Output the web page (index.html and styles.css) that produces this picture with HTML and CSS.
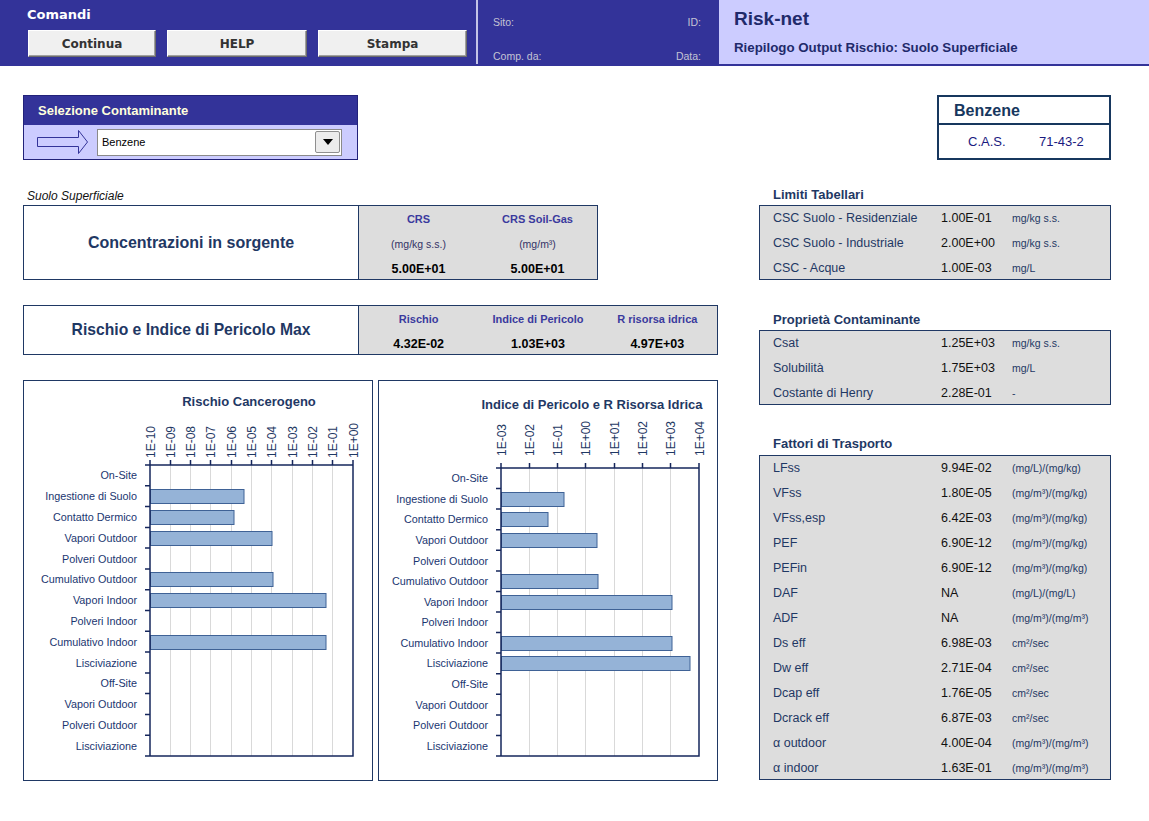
FILE: index.html
```html
<!DOCTYPE html>
<html lang="it">
<head>
<meta charset="utf-8">
<title>Risk-net - Riepilogo Output Rischio</title>
<link rel="stylesheet" href="styles.css">
</head>
<body>
<header class="topbar">
  <div class="cmd">
    <div class="cmd-title">Comandi</div>
    <div class="cmd-buttons">
      <button class="btn btn-continua">Continua</button>
      <button class="btn btn-help">HELP</button>
      <button class="btn btn-stampa">Stampa</button>
    </div>
  </div>
  <div class="info">
    <div class="info-row"><span>Sito:</span><span>ID:</span></div>
    <div class="info-row"><span>Comp. da:</span><span>Data:</span></div>
  </div>
  <div class="title-area">
    <div class="app-name">Risk-net</div>
    <div class="app-sub">Riepilogo Output Rischio: Suolo Superficiale</div>
  </div>
</header>

<main class="main">
  <section class="col-left">
    <div class="sel">
      <div class="sel-head">Selezione Contaminante</div>
      <div class="sel-body">
        <svg class="sel-arrow" width="53" height="25" viewBox="0 0 53 25">
          <path d="M1.5 7.5 H42.5 V0.5 L51.5 12 L42.5 23.5 V16.5 H1.5 Z" fill="#ccccff" stroke="#333399" stroke-width="1"/>
        </svg>
        <div class="select">
          <span class="select-text">Benzene</span>
          <span class="select-btn"><span class="tri"></span></span>
        </div>
      </div>
    </div>

    <div class="suolo">Suolo Superficiale</div>

    <div class="conc">
      <div class="conc-title">Concentrazioni in sorgente</div>
      <div class="conc-data cols2">
        <div class="col-h">CRS</div>
        <div class="col-h">CRS Soil-Gas</div>
        <div class="col-u">(mg/kg s.s.)</div>
        <div class="col-u">(mg/m³)</div>
        <div class="col-v">5.00E+01</div>
        <div class="col-v">5.00E+01</div>
      </div>
    </div>

    <div class="risk">
      <div class="conc-title risk-title">Rischio e Indice di Pericolo Max</div>
      <div class="conc-data cols3">
        <div class="col-h">Rischio</div>
        <div class="col-h">Indice di Pericolo</div>
        <div class="col-h">R risorsa idrica</div>
        <div class="col-v">4.32E-02</div>
        <div class="col-v">1.03E+03</div>
        <div class="col-v">4.97E+03</div>
      </div>
    </div>

    <div class="charts">
      <div class="chart chart1">
        <svg width="348" height="399" viewBox="0 0 348 399">
          <text class="c-title" x="225" y="25">Rischio Cancerogeno</text>
          <g class="grid">
            <line x1="146.5" y1="84" x2="146.5" y2="375"/>
            <line x1="166.5" y1="84" x2="166.5" y2="375"/>
            <line x1="186.5" y1="84" x2="186.5" y2="375"/>
            <line x1="207.5" y1="84" x2="207.5" y2="375"/>
            <line x1="227.5" y1="84" x2="227.5" y2="375"/>
            <line x1="247.5" y1="84" x2="247.5" y2="375"/>
            <line x1="268.5" y1="84" x2="268.5" y2="375"/>
            <line x1="288.5" y1="84" x2="288.5" y2="375"/>
            <line x1="308.5" y1="84" x2="308.5" y2="375"/>
          </g>
          <g class="ax-lbl">
            <text transform="translate(130.5,77) rotate(-90)">1E-10</text>
            <text transform="translate(150.8,77) rotate(-90)">1E-09</text>
            <text transform="translate(171.1,77) rotate(-90)">1E-08</text>
            <text transform="translate(191.4,77) rotate(-90)">1E-07</text>
            <text transform="translate(211.7,77) rotate(-90)">1E-06</text>
            <text transform="translate(232,77) rotate(-90)">1E-05</text>
            <text transform="translate(252.3,77) rotate(-90)">1E-04</text>
            <text transform="translate(272.6,77) rotate(-90)">1E-03</text>
            <text transform="translate(292.9,77) rotate(-90)">1E-02</text>
            <text transform="translate(313.2,77) rotate(-90)">1E-01</text>
            <text transform="translate(333.5,77) rotate(-90)">1E+00</text>
          </g>
          <g class="bars">
            <rect x="126.5" y="108.5" width="93.5" height="14"/>
            <rect x="126.5" y="129.5" width="83.5" height="14"/>
            <rect x="126.5" y="150.5" width="121.5" height="14"/>
            <rect x="126.5" y="191.5" width="122.5" height="14"/>
            <rect x="126.5" y="212.5" width="175.5" height="14"/>
            <rect x="126.5" y="254.5" width="175.5" height="14"/>
          </g>
          <path class="frame" d="M126 84 H329 V375 H126 Z M126 79 V84 M146.5 79 V84 M166.5 79 V84 M186.5 79 V84 M207.5 79 V84 M227.5 79 V84 M247.5 79 V84 M268.5 79 V84 M288.5 79 V84 M308.5 79 V84 M329 79 V84 M121 84 H126 M121 104.8 H126 M121 125.6 H126 M121 146.4 H126 M121 167.1 H126 M121 187.9 H126 M121 208.7 H126 M121 229.5 H126 M121 250.3 H126 M121 271.1 H126 M121 291.9 H126 M121 312.6 H126 M121 333.4 H126 M121 354.2 H126 M121 375 H126"/>
          <g class="cat-lbl">
            <text x="113" y="98.4">On-Site</text>
            <text x="113" y="119.2">Ingestione di Suolo</text>
            <text x="113" y="140">Contatto Dermico</text>
            <text x="113" y="160.8">Vapori Outdoor</text>
            <text x="113" y="181.5">Polveri Outdoor</text>
            <text x="113" y="202.3">Cumulativo Outdoor</text>
            <text x="113" y="223.1">Vapori Indoor</text>
            <text x="113" y="243.9">Polveri Indoor</text>
            <text x="113" y="264.7">Cumulativo Indoor</text>
            <text x="113" y="285.5">Lisciviazione</text>
            <text x="113" y="306.3">Off-Site</text>
            <text x="113" y="327">Vapori Outdoor</text>
            <text x="113" y="347.8">Polveri Outdoor</text>
            <text x="113" y="368.6">Lisciviazione</text>
          </g>
        </svg>
      </div>
      <div class="chart chart2">
        <svg width="338" height="399" viewBox="0 0 338 399">
          <text class="c-title" x="213" y="28">Indice di Pericolo e R Risorsa Idrica</text>
          <g class="grid">
            <line x1="150.5" y1="87" x2="150.5" y2="375"/>
            <line x1="178.5" y1="87" x2="178.5" y2="375"/>
            <line x1="206.5" y1="87" x2="206.5" y2="375"/>
            <line x1="235.5" y1="87" x2="235.5" y2="375"/>
            <line x1="263.5" y1="87" x2="263.5" y2="375"/>
            <line x1="291.5" y1="87" x2="291.5" y2="375"/>
          </g>
          <g class="ax-lbl">
            <text transform="translate(126.5,75) rotate(-90)">1E-03</text>
            <text transform="translate(154.8,75) rotate(-90)">1E-02</text>
            <text transform="translate(183.1,75) rotate(-90)">1E-01</text>
            <text transform="translate(211.4,75) rotate(-90)">1E+00</text>
            <text transform="translate(239.6,75) rotate(-90)">1E+01</text>
            <text transform="translate(267.9,75) rotate(-90)">1E+02</text>
            <text transform="translate(296.2,75) rotate(-90)">1E+03</text>
            <text transform="translate(324.5,75) rotate(-90)">1E+04</text>
          </g>
          <g class="bars">
            <rect x="122.5" y="111.5" width="62.5" height="14"/>
            <rect x="122.5" y="131.5" width="46.5" height="14"/>
            <rect x="122.5" y="152.5" width="95.5" height="14"/>
            <rect x="122.5" y="193.5" width="96.5" height="14"/>
            <rect x="122.5" y="214.5" width="170.5" height="14"/>
            <rect x="122.5" y="255.5" width="170.5" height="14"/>
            <rect x="122.5" y="275.5" width="188.5" height="14"/>
          </g>
          <path class="frame" d="M122 87 H320 V375 H122 Z M122 82 V87 M150.5 82 V87 M178.5 82 V87 M206.5 82 V87 M235.5 82 V87 M263.5 82 V87 M291.5 82 V87 M320 82 V87 M117 87 H122 M117 107.6 H122 M117 128.1 H122 M117 148.7 H122 M117 169.3 H122 M117 189.9 H122 M117 210.4 H122 M117 231 H122 M117 251.6 H122 M117 272.1 H122 M117 292.7 H122 M117 313.3 H122 M117 333.9 H122 M117 354.4 H122 M117 375 H122"/>
          <g class="cat-lbl">
            <text x="109" y="101.3">On-Site</text>
            <text x="109" y="121.9">Ingestione di Suolo</text>
            <text x="109" y="142.4">Contatto Dermico</text>
            <text x="109" y="163">Vapori Outdoor</text>
            <text x="109" y="183.6">Polveri Outdoor</text>
            <text x="109" y="204.1">Cumulativo Outdoor</text>
            <text x="109" y="224.7">Vapori Indoor</text>
            <text x="109" y="245.3">Polveri Indoor</text>
            <text x="109" y="265.9">Cumulativo Indoor</text>
            <text x="109" y="286.4">Lisciviazione</text>
            <text x="109" y="307">Off-Site</text>
            <text x="109" y="327.6">Vapori Outdoor</text>
            <text x="109" y="348.1">Polveri Outdoor</text>
            <text x="109" y="368.7">Lisciviazione</text>
          </g>
        </svg>
      </div>
    </div>
  </section>

  <section class="col-right">
    <div class="benz">
      <div class="benz-head">Benzene</div>
      <div class="benz-cas"><span class="cas-k">C.A.S.</span><span>71-43-2</span></div>
    </div>

    <div class="sec-title t-limiti">Limiti Tabellari</div>
    <div class="kv-box h3">
      <div class="kv-rows">
        <div class="kv-k">CSC Suolo - Residenziale</div><div class="kv-v">1.00E-01</div><div class="kv-u">mg/kg s.s.</div>
        <div class="kv-k">CSC Suolo - Industriale</div><div class="kv-v">2.00E+00</div><div class="kv-u">mg/kg s.s.</div>
        <div class="kv-k">CSC - Acque</div><div class="kv-v">1.00E-03</div><div class="kv-u">mg/L</div>
      </div>
    </div>

    <div class="sec-title t-prop">Proprietà Contaminante</div>
    <div class="kv-box h3">
      <div class="kv-rows">
        <div class="kv-k">Csat</div><div class="kv-v">1.25E+03</div><div class="kv-u">mg/kg s.s.</div>
        <div class="kv-k">Solubilità</div><div class="kv-v">1.75E+03</div><div class="kv-u">mg/L</div>
        <div class="kv-k">Costante di Henry</div><div class="kv-v">2.28E-01</div><div class="kv-u">-</div>
      </div>
    </div>

    <div class="sec-title t-fatt">Fattori di Trasporto</div>
    <div class="kv-box h13">
      <div class="kv-rows">
        <div class="kv-k">LFss</div><div class="kv-v">9.94E-02</div><div class="kv-u">(mg/L)/(mg/kg)</div>
        <div class="kv-k">VFss</div><div class="kv-v">1.80E-05</div><div class="kv-u">(mg/m³)/(mg/kg)</div>
        <div class="kv-k">VFss,esp</div><div class="kv-v">6.42E-03</div><div class="kv-u">(mg/m³)/(mg/kg)</div>
        <div class="kv-k">PEF</div><div class="kv-v">6.90E-12</div><div class="kv-u">(mg/m³)/(mg/kg)</div>
        <div class="kv-k">PEFin</div><div class="kv-v">6.90E-12</div><div class="kv-u">(mg/m³)/(mg/kg)</div>
        <div class="kv-k">DAF</div><div class="kv-v">NA</div><div class="kv-u">(mg/L)/(mg/L)</div>
        <div class="kv-k">ADF</div><div class="kv-v">NA</div><div class="kv-u">(mg/m³)/(mg/m³)</div>
        <div class="kv-k">Ds eff</div><div class="kv-v">6.98E-03</div><div class="kv-u">cm²/sec</div>
        <div class="kv-k">Dw eff</div><div class="kv-v">2.71E-04</div><div class="kv-u">cm²/sec</div>
        <div class="kv-k">Dcap eff</div><div class="kv-v">1.76E-05</div><div class="kv-u">cm²/sec</div>
        <div class="kv-k">Dcrack eff</div><div class="kv-v">6.87E-03</div><div class="kv-u">cm²/sec</div>
        <div class="kv-k">α outdoor</div><div class="kv-v">4.00E-04</div><div class="kv-u">(mg/m³)/(mg/m³)</div>
        <div class="kv-k">α indoor</div><div class="kv-v">1.63E-01</div><div class="kv-u">(mg/m³)/(mg/m³)</div>
      </div>
    </div>
  </section>
</main>
</body>
</html>
```

FILE: styles.css
```css
* { box-sizing: border-box; }
html, body { margin: 0; padding: 0; background: #ffffff; }
body {
  font-family: "Liberation Sans", Arial, sans-serif;
  color: #000;
  width: 1149px;
  height: 821px;
  overflow: hidden;
}

/* ---------- top bar ---------- */
.topbar {
  display: flex;
  height: 66px;
  border-bottom: 2px solid #333399;
}
.cmd {
  width: 478px;
  background: #333399;
  border-right: 2px solid #c4c4e6;
  padding: 6px 0 0 27px;
}
.cmd-title {
  font-family: "DejaVu Sans", sans-serif;
  font-weight: bold;
  font-size: 13px;
  line-height: 18px;
  color: #ffffff;
}
.cmd-buttons {
  display: flex;
  gap: 11px;
  margin-top: 6px;
  padding-left: 1px;
}
.btn {
  height: 27px;
  margin: 0;
  padding: 0;
  background: #f0f0f0;
  border: 1px solid;
  border-color: #ffffff #6c6c6c #6c6c6c #ffffff;
  box-shadow: inset -1px -1px 0 #a0a0a0;
  font-family: "DejaVu Sans", sans-serif;
  font-weight: bold;
  font-size: 12px;
  color: #333333;
}
.btn-continua { width: 128px; }
.btn-help { width: 140px; }
.btn-stampa { width: 149px; }

.info {
  width: 241px;
  background: #333399;
  display: flex;
  flex-direction: column;
  gap: 20px;
  padding: 15px 18px 0 15px;
}
.info-row {
  display: flex;
  justify-content: space-between;
  font-size: 10.5px;
  line-height: 14px;
  color: #c4c4d4;
}

.title-area {
  flex: 1;
  background: #ccccff;
  padding: 8px 0 0 15px;
  color: #1f2a6b;
}
.app-name {
  font-weight: bold;
  font-size: 19px;
  line-height: 22px;
}
.app-sub {
  margin-top: 10px;
  font-weight: bold;
  font-size: 13.3px;
  line-height: 16px;
}

/* ---------- main layout ---------- */
.main {
  display: flex;
  padding: 29px 0 0 23px;
}
.col-left { width: 695px; }
.col-right {
  width: 352px;
  margin-left: 41px;
  display: flex;
  flex-direction: column;
}

/* selezione */
.sel {
  width: 335px;
  height: 65px;
  border: 1px solid #22227a;
}
.sel-head {
  height: 29px;
  background: #333399;
  color: #ffffdd;
  font-weight: bold;
  font-size: 13px;
  line-height: 29px;
  padding-left: 14px;
}
.sel-body {
  height: 34px;
  background: #ccccff;
  display: flex;
  align-items: center;
  padding-left: 12px;
}
.sel-arrow { display: block; }
.select {
  margin-left: 8px;
  width: 245px;
  height: 27px;
  background: #ffffff;
  border: 1px solid #8a8a8a;
  display: flex;
  align-items: center;
  justify-content: space-between;
  padding: 0 1px 0 4px;
}
.select-text { font-size: 11px; color: #000; }
.select-btn {
  width: 25px;
  height: 22px;
  background: #ececec;
  border: 1px solid #8f8f8f;
  border-radius: 2px;
  display: flex;
  align-items: center;
  justify-content: center;
}
.tri {
  width: 0;
  height: 0;
  border-left: 5px solid transparent;
  border-right: 5px solid transparent;
  border-top: 6px solid #000;
}

.suolo {
  margin-top: 27px;
  height: 18px;
  line-height: 18px;
  padding-left: 4px;
  font-style: italic;
  font-size: 12px;
  color: #111;
}

/* concentrazioni / rischio tables */
.conc, .risk {
  display: flex;
  border: 1px solid #1f3864;
}
.conc { width: 575px; height: 75px; }
.risk { width: 695px; height: 50px; margin-top: 25px; }
.conc-title {
  width: 335px;
  flex: none;
  border-right: 1px solid #1f3864;
  background: #ffffff;
  display: flex;
  align-items: center;
  justify-content: center;
  font-weight: bold;
  font-size: 16px;
  color: #1f3864;
}
.risk-title { font-size: 15.7px; }
.conc-data {
  flex: 1;
  background: #dddddd;
  display: grid;
  grid-auto-rows: 25px;
  align-items: center;
  text-align: center;
}
.cols2 { grid-template-columns: 1fr 1fr; }
.cols3 { grid-template-columns: 1fr 1fr 1fr; }
.col-h { font-weight: bold; font-size: 11px; color: #3a3a9e; }
.col-u { font-size: 10.5px; color: #333366; }
.col-v { font-weight: bold; font-size: 12.5px; color: #000; }

/* charts */
.charts {
  display: flex;
  gap: 5px;
  margin-top: 25px;
}
.chart {
  height: 401px;
  border: 1px solid #1f3864;
  background: #ffffff;
}
.chart svg { display: block; }
.chart1 { width: 350px; }
.chart2 { width: 340px; }

.c-title {
  font-family: "Liberation Sans", Arial, sans-serif;
  font-weight: bold;
  font-size: 13px;
  fill: #1f3864;
  text-anchor: middle;
}
.grid line { stroke: #d9d9d9; stroke-width: 1; }
.ax-lbl text {
  font-family: "Liberation Sans", Arial, sans-serif;
  font-size: 12px;
  fill: #1f3864;
}
.cat-lbl text {
  font-family: "Liberation Sans", Arial, sans-serif;
  font-size: 10.8px;
  fill: #1a3670;
  text-anchor: end;
}
.bars rect { fill: #95b3d7; stroke: #3f6296; stroke-width: 1; }
.frame { fill: none; stroke: #16275c; stroke-width: 1.5; }

/* right column */
.benz {
  margin-left: auto;
  width: 174px;
  height: 65px;
  border: 2px solid #17375e;
}
.benz-head {
  height: 28px;
  border-bottom: 2px solid #17375e;
  padding-left: 15px;
  font-weight: bold;
  font-size: 16px;
  line-height: 27px;
  color: #17375e;
}
.benz-cas {
  display: flex;
  align-items: center;
  height: 31px;
  padding: 2px 0 0 29px;
  font-size: 13px;
  color: #1a1a80;
}
.cas-k { width: 71px; }

.sec-title {
  font-weight: bold;
  font-size: 13px;
  line-height: 16px;
  color: #1f3864;
  padding-left: 14px;
}
.t-limiti { margin-top: 27px; height: 18px; }
.t-prop { margin-top: 32px; height: 18px; }
.t-fatt { margin-top: 31px; height: 19px; }

.kv-box {
  background: #dddddd;
  border: 1px solid #1f3864;
  padding-left: 13px;
}
.kv-box.h3 { height: 75px; }
.kv-box.h13 { height: 325px; }
.kv-rows {
  margin-top: -1px;
  display: grid;
  grid-template-columns: 168px 71px 1fr;
  grid-auto-rows: 25px;
  align-items: center;
}
.kv-k { font-size: 12.5px; color: #1f3864; }
.kv-v { font-size: 12.5px; color: #111111; }
.kv-u { font-size: 10.5px; color: #1f3864; }
```
